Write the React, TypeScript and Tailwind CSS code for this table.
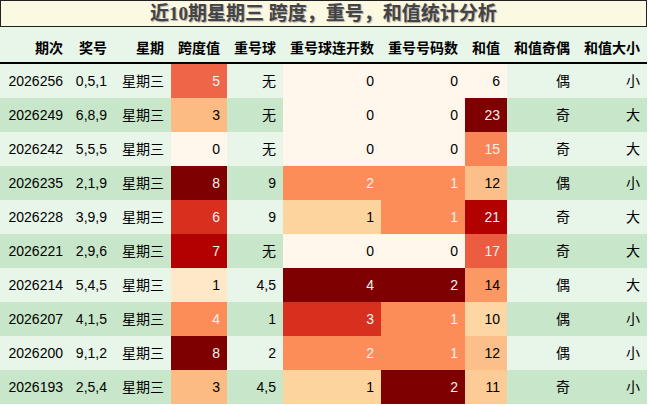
import React from "react";

type Cell = { v: string; bg?: string; fg?: string };

const W = "grid grid-cols-[70px_44px_57px_56px_56px_98px_84px_42px_70px_70px]";

const C = {
  c0: "#fff7ec",
  c1: "#fee8c8",
  c2: "#fdd49e",
  c3: "#fdbb84",
  c4: "#fc8d59",
  c5: "#ef6548",
  c6: "#d7301f",
  c7: "#b30000",
  c8: "#7f0000",
};

const spanColor: Record<string, string> = {
  "0": C.c0, "1": C.c1, "2": C.c2, "3": C.c3, "4": C.c4, "5": C.c5, "6": C.c6, "7": C.c7, "8": C.c8,
};
const lianColor: Record<string, string> = { "0": C.c0, "1": C.c2, "2": C.c4, "3": C.c6, "4": C.c8 };
const numColor: Record<string, string> = { "0": C.c0, "1": C.c4, "2": C.c8 };
const sumColor: Record<string, string> = {
  "6": "#fff7ec",
  "23": "#7f0000",
  "15": "#f98455",
  "12": "#fdbf89",
  "21": "#b30000",
  "17": "#eb5c41",
  "14": "#fc9863",
  "10": "#fdd6a3",
  "11": "#fdcb95",
};
const darkText = new Set([C.c4, C.c5, C.c6, C.c7, C.c8, "#f98455", "#eb5c41"]);

const rows = [
  ["2026256", "0,5,1", "星期三", "5", "无", "0", "0", "6", "偶", "小"],
  ["2026249", "6,8,9", "星期三", "3", "无", "0", "0", "23", "奇", "大"],
  ["2026242", "5,5,5", "星期三", "0", "无", "0", "0", "15", "奇", "大"],
  ["2026235", "2,1,9", "星期三", "8", "9", "2", "1", "12", "偶", "小"],
  ["2026228", "3,9,9", "星期三", "6", "9", "1", "1", "21", "奇", "大"],
  ["2026221", "2,9,6", "星期三", "7", "无", "0", "0", "17", "奇", "大"],
  ["2026214", "5,4,5", "星期三", "1", "4,5", "4", "2", "14", "偶", "大"],
  ["2026207", "4,1,5", "星期三", "4", "1", "3", "1", "10", "偶", "小"],
  ["2026200", "9,1,2", "星期三", "8", "2", "2", "1", "12", "偶", "小"],
  ["2026193", "2,5,4", "星期三", "3", "4,5", "1", "2", "11", "奇", "小"],
];

const headers = ["期次", "奖号", "星期", "跨度值", "重号球", "重号球连开数", "重号号码数", "和值", "和值奇偶", "和值大小"];

export default function App() {
  return (
    <div
      className="w-[648px] h-[405px] bg-white overflow-hidden"
      style={{ fontFamily: '"Liberation Sans", "Noto Sans CJK SC", sans-serif' }}
    >
      <div
        className="w-[647px] h-[27px] border border-[#222] bg-[#fcf9e3] flex items-center justify-center text-[19px] font-bold text-[#444] leading-[25px] [text-shadow:1px_1px_1px_#aaa]"
        style={{ fontFamily: '"Liberation Serif", "Noto Sans CJK SC", serif' }}
      >
        近10期星期三 跨度，重号，和值统计分析
      </div>
      <div className={`${W} w-[647px] h-[37px] bg-[#e8f5e9] border-b-2 border-black`}>
        {headers.map((h) => (
          <div key={h} className="pt-[11px] pr-[7px] text-right text-[14px] font-bold leading-[20px] text-black">
            {h}
          </div>
        ))}
      </div>
      {rows.map((r, i) => {
        const rowBg = i % 2 === 0 ? "#e8f5e9" : "#c8e6c9";
        const cells: Cell[] = r.map((v, j) => {
          let bg = rowBg;
          if (j === 3) bg = spanColor[v];
          if (j === 5) bg = lianColor[v];
          if (j === 6) bg = numColor[v];
          if (j === 7) bg = sumColor[v];
          const fg = darkText.has(bg) ? "#f1f1f1" : "#000000";
          return { v, bg, fg };
        });
        return (
          <div key={r[0]} className={`${W} w-[647px] h-[34px]`}>
            {cells.map((c, j) => (
              <div
                key={j}
                className="h-[34px] flex items-center justify-end pr-[7px] text-[14px] leading-[20px]"
                style={{ backgroundColor: c.bg, color: c.fg }}
              >
                {c.v}
              </div>
            ))}
          </div>
        );
      })}
    </div>
  );
}
